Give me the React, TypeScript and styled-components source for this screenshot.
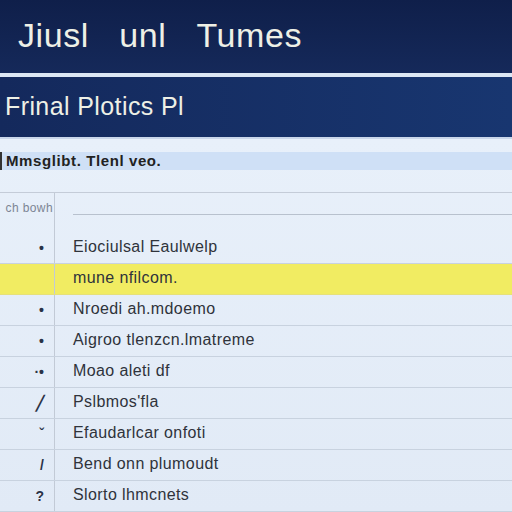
import React from "react";
import styled, { createGlobalStyle } from "styled-components";

const GlobalStyle = createGlobalStyle`
  html, body {
    margin: 0;
    padding: 0;
    width: 512px;
    height: 512px;
    overflow: hidden;
    background: #e4edf8;
    font-family: "Liberation Sans", Arial, sans-serif;
  }
`;

const rows = [
  { mark: "•", label: "Eiociulsal Eaulwelp" },
  { mark: "", label: "mune nfilcom.", active: true },
  { mark: "•", label: "Nroedi ah.mdoemo" },
  { mark: "•", label: "Aigroo tlenzcn.lmatreme" },
  { mark: "·•", label: "Moao aleti df" },
  { mark: "╱", label: "Pslbmos'fla" },
  { mark: "ˇ", label: "Efaudarlcar onfoti" },
  { mark: "/", label: "Bend onn plumoudt" },
  { mark: "?", label: "Slorto lhmcnets" },
];

const App = () => {
  return (
    <>
      <GlobalStyle />
      <Page>
        <TitleBar>
          <Title>Jiusl&nbsp;&nbsp;&nbsp;unl&nbsp;&nbsp;&nbsp;Tumes</Title>
        </TitleBar>
        <SubBar>
          <SubTitle>Frinal Plotics Pl</SubTitle>
        </SubBar>
        <Panel>
          <Notice>Mmsglibt. Tlenl veo.</Notice>
          <Table>
            <HeadRow>
              <SideCell>
                <SmallLabel>ch bowh</SmallLabel>
              </SideCell>
              <HeadMain>
                <HeadRule />
              </HeadMain>
            </HeadRow>
            {rows.map((r, i) => (
              <Row key={`row${i}`} active={r.active}>
                <SideCell>
                  <Mark>{r.mark}</Mark>
                </SideCell>
                <Label>{r.label}</Label>
              </Row>
            ))}
          </Table>
        </Panel>
      </Page>
    </>
  );
};
export default App;

const Page = styled.div`
  width: 512px;
  height: 512px;
  display: flex;
  flex-direction: column;
  overflow: hidden;
`;

const TitleBar = styled.div`
  height: 74px;
  background: linear-gradient(180deg, #0f1f4a 0%, #15295a 100%);
  display: flex;
  align-items: center;
  padding-left: 18px;
  border-bottom: 4px solid #dce7f4;
`;

const Title = styled.div`
  color: #eef0e6;
  font-size: 34px;
  letter-spacing: 0.6px;
  margin-top: -2px;
`;

const SubBar = styled.div`
  height: 60px;
  background: linear-gradient(90deg, #14295c 0%, #183670 100%);
  display: flex;
  align-items: center;
  padding-left: 5px;
  border-bottom: 2px solid #c9d6ea;
`;

const SubTitle = styled.div`
  color: #eef0e6;
  font-size: 25px;
  letter-spacing: 0.4px;
  margin-top: -2px;
`;

const Panel = styled.div`
  flex: 1;
  background: linear-gradient(180deg, #e8f0fa 0%, #e1eaf6 100%);
  display: flex;
  flex-direction: column;
  padding-top: 13px;
`;

const Notice = styled.div`
  height: 18px;
  background: #cfe0f6;
  color: #222;
  font-size: 15px;
  font-weight: bold;
  letter-spacing: 0.6px;
  line-height: 18px;
  padding-left: 4px;
  border-left: 2px solid #333;
  margin-bottom: 22px;
`;

const Table = styled.div`
  border-top: 1px solid #c4ccd8;
  display: flex;
  flex-direction: column;
`;

const HeadRow = styled.div`
  display: flex;
  height: 40px;
`;

const SideCell = styled.div`
  width: 55px;
  flex-shrink: 0;
  border-right: 1px solid #c2cad6;
  display: flex;
  align-items: center;
  justify-content: flex-end;
  padding-right: 10px;
  box-sizing: border-box;
`;

const SmallLabel = styled.span`
  font-size: 12px;
  color: #7c8594;
  margin-right: -9px;
  align-self: flex-start;
  margin-top: 8px;
  letter-spacing: 0.4px;
  white-space: nowrap;
`;

const HeadMain = styled.div`
  flex: 1;
  padding-left: 18px;
  padding-top: 21px;
`;

const HeadRule = styled.div`
  height: 1px;
  background: #b8c1ce;
`;

const Row = styled.div<{ active?: boolean }>`
  display: flex;
  height: 31px;
  background: ${({ active }) => (active ? "#f1ec62" : "transparent")};
  border-bottom: 1px solid ${({ active }) => (active ? "#e6e07a" : "#c8d2df")};
  box-sizing: border-box;
`;

const Mark = styled.span`
  font-size: 14px;
  color: #2a3247;
  font-weight: bold;
`;

const Label = styled.div`
  display: flex;
  align-items: center;
  padding-left: 18px;
  padding-bottom: 3px;
  font-size: 16px;
  letter-spacing: 0.4px;
  color: #2f333b;
`;
